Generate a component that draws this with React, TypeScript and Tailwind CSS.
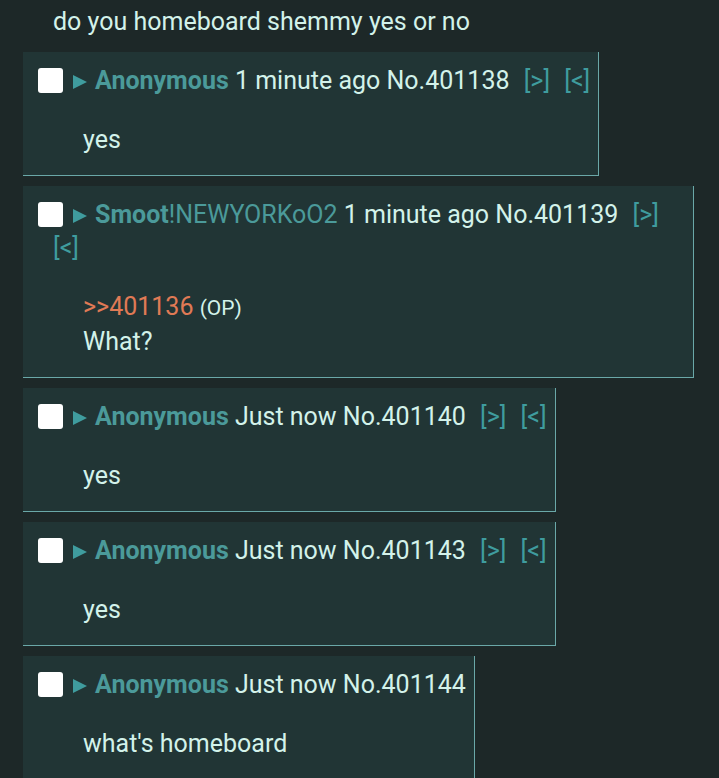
import React from "react";

interface Post {
  name: string;
  trip?: string;
  time: string;
  no: number;
  quote?: number;
  lines: string[];
  links?: boolean;
}

const posts: Post[] = [
  { name: "Anonymous", time: "1 minute ago", no: 401138, lines: ["yes"], links: true },
  { name: "Smoot", trip: "!NEWYORKoO2", time: "1 minute ago", no: 401139, quote: 401136, lines: ["What?"], links: true },
  { name: "Anonymous", time: "Just now", no: 401140, lines: ["yes"], links: true },
  { name: "Anonymous", time: "Just now", no: 401143, lines: ["yes"], links: true },
  { name: "Anonymous", time: "Just now", no: 401144, lines: ["what's homeboard"] },
];

const Reply = ({ post }: { post: Post }) => {
  return (
    <div className="w-fit max-w-full bg-[#213535] border-r border-b border-[#6aa8a8] pl-[30px] pr-2 pt-[12px] pb-[18px]">
      <div className="-indent-[15px] leading-[33px]">
        <span className="inline-block w-[25px] h-[25px] bg-white rounded-[3px] align-[-4px] mr-[9px]" />
        <svg width="16" height="16" viewBox="0 0 16 16" className="inline-block align-[-1px] mr-[7px]">
          <path d="M1 1 L15 8 L1 15 Z" fill="#3f9c9e" />
        </svg>
        <span className="text-[#4b9a9a] font-bold">{post.name}</span>
        {post.trip && <span className="text-[#4b9a9a]">{post.trip}</span>}{" "}
        <span>{post.time}</span>{" "}
        <span className={post.links ? "mr-[8px]" : ""}>No.{post.no}</span>
        {post.links && (
          <>
            {" "}
            <span className="text-[#3f9c9e] mr-[8px]">[&gt;]</span>{" "}
            <span className="text-[#3f9c9e]">[&lt;]</span>
          </>
        )}
      </div>
      <div className="ml-[30px] mt-[26px] leading-[34px]">
        {post.quote && (
          <div>
            <span className="text-[#e07a55]">&gt;&gt;{post.quote}</span>{" "}
            <span className="text-[21px]">(OP)</span>
          </div>
        )}
        {post.lines.map((l, i) => (
          <div key={i}>{l}</div>
        ))}
      </div>
    </div>
  );
};

export default function App() {
  return (
    <div
      className="min-h-[778px] bg-[#1d2828] text-[#d3f2ea] text-[25px] pl-[23px] pr-[25px] overflow-hidden"
      style={{ fontFamily: "Roboto, 'Noto Sans', sans-serif" }}
    >
      <div className="pl-[30px] pt-[5px] pb-[13px] leading-[34px]">do you homeboard shemmy yes or no</div>
      <div className="flex flex-col gap-[10px]">
        {posts.map((p) => (
          <Reply key={p.no} post={p} />
        ))}
      </div>
    </div>
  );
}
